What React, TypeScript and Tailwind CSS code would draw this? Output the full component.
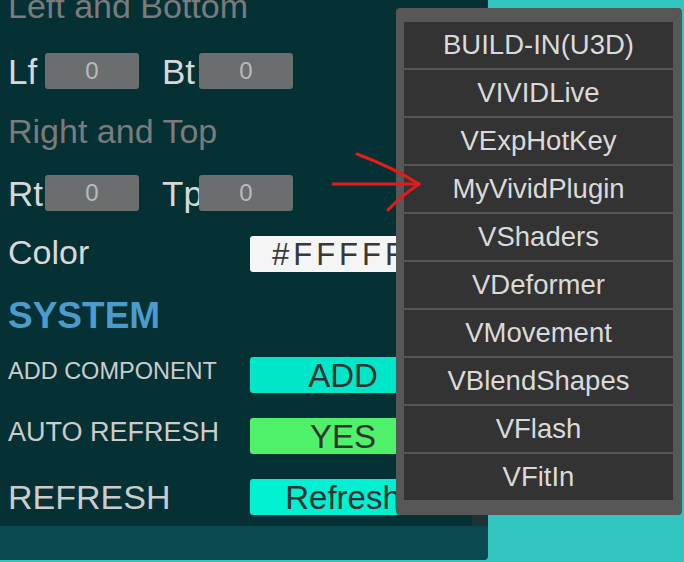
const plugins = [
  "BUILD-IN(U3D)",
  "VIVIDLive",
  "VExpHotKey",
  "MyVividPlugin",
  "VShaders",
  "VDeformer",
  "VMovement",
  "VBlendShapes",
  "VFlash",
  "VFitIn",
];

function NumBox({ value }: { value: string }) {
  return (
    <div className="w-[94px] h-[36px] rounded-[3px] bg-[#6a6e6f] flex items-center justify-center text-[24px] leading-none text-[#b7bbbc]">
      {value}
    </div>
  );
}

function ActionBox({ label, color }: { label: string; color: string }) {
  return (
    <div
      className={`w-[186px] h-[36px] rounded-[3px] flex items-center justify-center text-[33px] leading-none text-[#333333] ${color}`}
    >
      {label}
    </div>
  );
}

export default function App() {
  return (
    <div className="relative w-[684px] h-[562px] overflow-hidden bg-[#33c6c1] font-['Liberation_Sans',Arial,sans-serif]">
      <div className="w-[488px] flex flex-col">
        <div className="h-[526px] bg-[#053034] overflow-hidden pl-[8px] flex flex-col">
          <div className="-mt-[11px] text-[34px] leading-[34px] text-[#7b7b7b]">Left and Bottom</div>

          <div className="mt-[30px] h-[36px] flex items-center">
            <span className="w-[37px] text-[35px] leading-[35px] text-[#d8d8d8]">Lf</span>
            <NumBox value="0" />
            <span className="w-[60px] pl-[23px] text-[35px] leading-[35px] text-[#d8d8d8]">Bt</span>
            <NumBox value="0" />
          </div>

          <div className="mt-[25px] text-[34px] leading-[34px] text-[#7b7b7b]">Right and Top</div>

          <div className="mt-[27px] h-[36px] flex items-center">
            <span className="w-[37px] text-[35px] leading-[35px] text-[#d8d8d8]">Rt</span>
            <NumBox value="0" />
            <span className="w-[60px] pl-[23px] text-[35px] leading-[35px] text-[#d8d8d8]">Tp</span>
            <NumBox value="0" />
          </div>

          <div className="mt-[25px] h-[36px] flex items-start">
            <span className="w-[242px] -mt-[1px] text-[34px] leading-[34px] text-[#d8d8d8]">Color</span>
            <div className="w-[220px] h-[36px] rounded-[3px] bg-[#f5f5f5] flex items-center pl-[22px] text-[31px] leading-none tracking-[4px] text-[#383838] overflow-hidden whitespace-nowrap">
              #FFFFFF
            </div>
          </div>

          <div className="mt-[25px] text-[37px] leading-[37px] font-bold text-[#4b9bcc]">SYSTEM</div>

          <div className="mt-[23px] h-[36px] flex items-start">
            <span className="w-[242px] mt-[2px] text-[23.5px] leading-[24px] text-[#cccccc]">ADD COMPONENT</span>
            <ActionBox label="ADD" color="bg-[#00e6c8]" />
          </div>

          <div className="mt-[25px] h-[36px] flex items-start">
            <span className="w-[242px] mt-[1px] text-[27px] leading-[27px] text-[#cccccc]">AUTO REFRESH</span>
            <ActionBox label="YES" color="bg-[#4ff06a]" />
          </div>

          <div className="mt-[25px] h-[36px] flex items-center">
            <span className="w-[242px] text-[34px] leading-[34px] text-[#cccccc]">REFRESH</span>
            <ActionBox label="Refresh" color="bg-[#00f0d2]" />
          </div>
        </div>
        <div className="h-[34px] bg-[#0b4950] rounded-br-[4px]" />
      </div>

      {/* panel scrollbar, mostly hidden by the popup */}
      <div className="absolute left-[472px] top-[510px] w-[16px] h-[16px] rounded-b-[2px] bg-[#1f3336]" />

      {/* plugin popup */}
      <div className="absolute left-[396px] top-[8px] w-[286px] h-[507px] rounded-[4px] bg-[#575757] pt-[14px] pl-[8px] pr-[9px] flex flex-col gap-[2px]">
        {plugins.map((p) => (
          <div
            key={p}
            className="h-[46px] bg-[#333333] flex items-center justify-center text-[27.5px] leading-none text-[#dadada]"
          >
            {p}
          </div>
        ))}
      </div>

      {/* red annotation arrow */}
      <svg className="absolute left-0 top-0" width="684" height="562" viewBox="0 0 684 562" fill="none">
        <path d="M333 184 L419 184" stroke="#e41b1b" strokeWidth="3" strokeLinecap="round" />
        <path d="M357 154 Q392 167 419 184" stroke="#e41b1b" strokeWidth="3" strokeLinecap="round" />
        <path d="M419 184 Q400 197 388 210" stroke="#e41b1b" strokeWidth="3" strokeLinecap="round" />
      </svg>
    </div>
  );
}
